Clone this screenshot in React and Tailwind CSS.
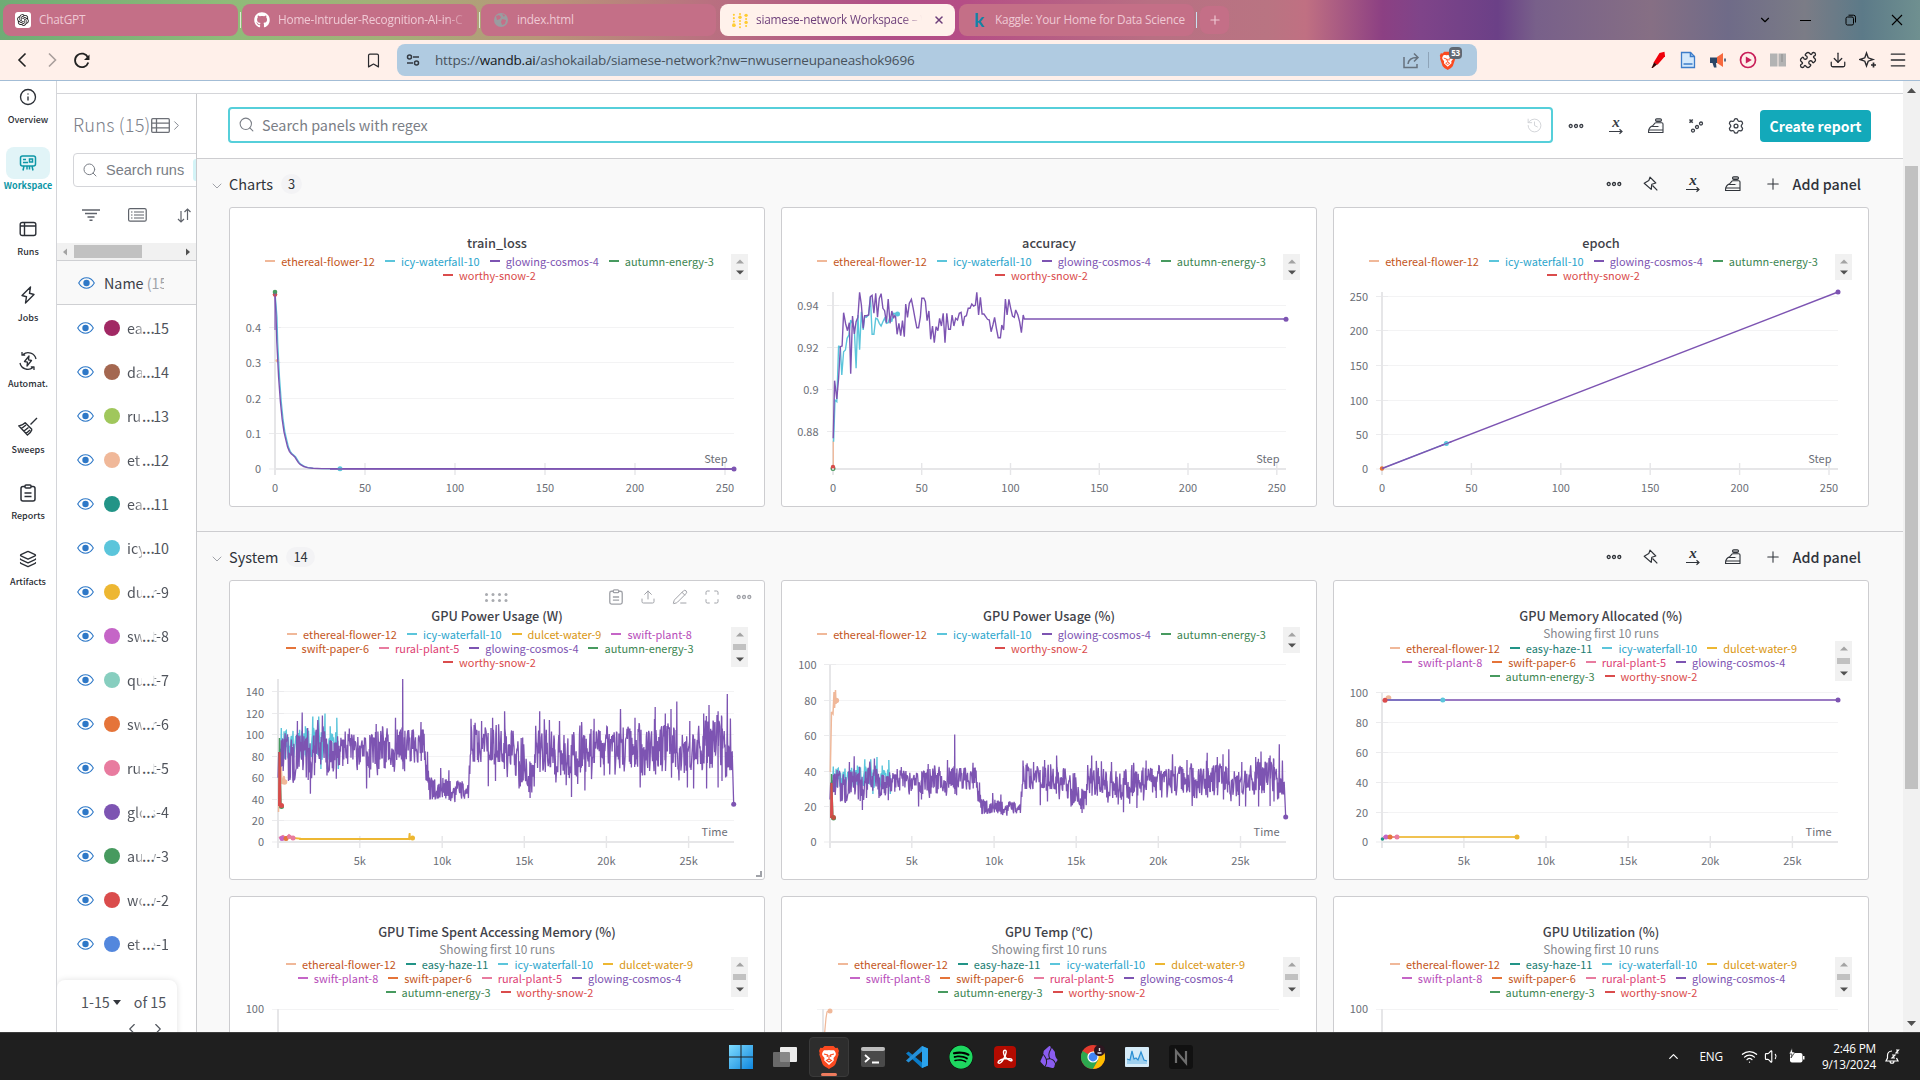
import React from "react";
import {
  Bookmark, Download, Menu, Puzzle, Search, Info, Zap, Layers, Plus,
  ChevronDown, ChevronLeft, ChevronRight, ChevronUp, History, X, Wifi, Volume1,
  Maximize, Upload, PencilLine,
} from "lucide-react";
import { FaGithub, FaSpotify } from "react-icons/fa";
import { RiOpenaiFill } from "react-icons/ri";
import { SiBrave, SiObsidian } from "react-icons/si";

const RUN = {
  e12: ["ethereal-flower-12", "#f0b899", "#c4561c"],
  h11: ["easy-haze-11", "#229487", "#1a7d72"],
  i10: ["icy-waterfall-10", "#5bc5db", "#2aa5cc"],
  d9: ["dulcet-water-9", "#edb732", "#d99611"],
  s8: ["swift-plant-8", "#c565c7", "#b64cb9"],
  p6: ["swift-paper-6", "#e57439", "#c4561c"],
  r5: ["rural-plant-5", "#e87b9f", "#dd3f74"],
  g4: ["glowing-cosmos-4", "#7d54b2", "#7d54b2"],
  a3: ["autumn-energy-3", "#479a5f", "#3c8551"],
  w2: ["worthy-snow-2", "#da4c4c", "#da4c4c"],
};

const FIVE = [["e12", "i10", "g4", "a3"], ["w2"]];
const NINE = [["e12", "i10", "d9", "s8"], ["p6", "r5", "g4", "a3"], ["w2"]];
const TEN = [["e12", "h11", "i10", "d9"], ["s8", "p6", "r5", "g4"], ["a3", "w2"]];

/* ---------- data ---------- */

function rng(seed) {
  let s = seed;
  return () => {
    s = (s * 1664525 + 1013904223) % 4294967296;
    return s / 4294967296;
  };
}

const ENVELOPE = [
  [4, 72, 96], [22, 66, 98], [40, 62, 92], [60, 72, 104], [80, 66, 98], [92, 60, 90], [105, 76, 104], [125, 74, 104], [140, 68, 94], [160, 74, 96],
  [200, 78, 100], [225, 72, 94], [255, 72, 98], [290, 74, 104], [310, 74, 98], [330, 78, 102], [370, 78, 102], [392, 80, 104],
  [398, 70, 92], [406, 60, 92], [408, 43, 59], [440, 43, 59], [470, 42, 55], [500, 44, 59], [515, 43, 57], [519, 70, 106], [530, 80, 108],
  [550, 78, 102], [575, 78, 108], [610, 78, 104], [640, 64, 98], [668, 62, 96], [672, 52, 78], [692, 50, 76], [696, 74, 106],
  [720, 70, 104], [745, 68, 98], [770, 62, 96], [795, 66, 98], [825, 70, 106], [835, 56, 88], [845, 72, 102],
  [890, 72, 100], [925, 70, 104], [965, 70, 104], [990, 68, 98], [1020, 72, 104], [1060, 72, 106], [1100, 68, 96], [1130, 74, 100],
  [1150, 74, 112], [1190, 74, 112], [1220, 74, 110], [1227, 72, 104],
];

const EXTREMES = [
  [51, 113], [64, 121], [86, 45], [119, 118], [156, 59], [192, 106], [238, 50], [246, 60], [264, 110], [281, 108], [316, 116], [336, 152], [341, 66],
  [385, 112], [439, 69], [461, 67], [521, 115], [549, 113], [567, 52], [579, 116], [587, 57], [611, 122], [650, 50], [680, 41], [706, 122],
  [732, 114], [746, 63], [759, 113], [778, 53], [792, 42], [809, 54], [820, 112], [829, 48], [853, 115], [880, 62], [925, 124], [964, 116], [978, 51],
  [1018, 126], [1019, 63], [1046, 120], [1061, 124], [1063, 60], [1077, 131], [1105, 51], [1112, 113], [1122, 50], [1149, 120], [1158, 50],
  [1164, 128], [1188, 51], [1189, 122], [1198, 118], [1199, 57], [1213, 138], [1218, 70],
];

function envelopeAt(u) {
  for (let i = 1; i < ENVELOPE.length; i++) {
    if (u <= ENVELOPE[i][0]) {
      const a = ENVELOPE[i - 1];
      const b = ENVELOPE[i];
      const t = (u - a[0]) / (b[0] - a[0]);
      return [a[1] + (b[1] - a[1]) * t, a[2] + (b[2] - a[2]) * t];
    }
  }
  return [80, 104];
}

/* x runs over 0..1232, y is in watts */
const POWER = (() => {
  const r = rng(77);
  const pts = [[0, 60], [2, 84]];
  let k = 0;
  for (let u = 5; u < 1227; u += 1.3) {
    const [lo, hi] = envelopeAt(u);
    const wide = r() < 0.12 ? 1.35 : 1;
    const side = r() < 0.5 ? -1 : 1;
    pts.push([u, (lo + hi) / 2 - 1 + side * Math.pow(r(), 0.85) * (hi - lo) * 0.68 * wide]);
    while (k < EXTREMES.length && EXTREMES[k][0] <= u) {
      pts.push([u + 0.6, EXTREMES[k][1]]);
      k++;
    }
  }
  pts.push([1228, 84], [1232, 35]);
  return pts;
})();

const ICY_POWER = (() => {
  const r = rng(9);
  const pts = [];
  for (let u = 6; u < 165; u += 1.5) {
    pts.push([u, 76 + r() * 31]);
  }
  [[74, 108], [94, 117], [110, 117], [127, 120], [141, 108], [159, 116], [116, 68], [133, 68], [163, 68]].forEach((p) => pts.push(p));
  return pts.sort((a, b) => a[0] - b[0]);
})();

const powerLine = (data, x0, y0, perWatt) =>
  data.map(([u, w]) => `${(x0 + u / 2.7034).toFixed(1)},${(y0 - w * perWatt).toFixed(1)}`).join(" ");

const ACC = "177,715 181,542 187,597 192,535 197,440 202,438 206,338 212,372 217,392 222,368 226,521 231,348 236,402 241,365 246,352 251,277 256,315 261,385 265,347 270,347 276,345 281,290 286,286 291,340 296,280 301,352 306,295 311,281 316,325 321,332 326,368 331,297 336,370 341,333 346,355 351,343 356,403 361,370 366,407 371,362 376,410 380,312 385,352 390,310 396,298 401,325 406,355 411,383 416,383 421,350 425,295 431,295 435,305 440,362 445,333 450,418 455,378 460,428 465,380 470,392 475,355 480,378 485,340 490,428 495,340 500,388 505,388 510,345 515,378 520,355 525,360 530,340 535,337 540,378 545,350 550,347 555,325 560,325 565,312 570,318 575,315 579,277 584,345 589,292 594,342 599,342 604,350 609,358 614,360 619,395 624,375 629,352 634,385 639,413 645,413 649,375 654,390 659,297 664,345 669,298 674,325 679,348 684,352 688,330 694,345 699,365 704,398 709,345 712,357 1445,357";
const ACC_ICY = "178,725 182,600 187,605 192,437 197,445 201,525 206,455 211,450 216,415 221,405 226,360 231,370 236,385 241,505 246,345 251,449 256,335 261,390 265,350 270,352 276,345 281,290 286,403 291,403 296,355 301,357 306,370 311,378 316,365 321,355 326,370 331,368 336,350 341,365 346,340 357,342";
const scaled = (s) =>
  s.split(" ").map((p) => {
    const [x, y] = p.split(",").map(Number);
    return `${(770 + x / 2.8).toFixed(1)},${(200 + y / 3).toFixed(1)}`;
  }).join(" ");

/* ---------- charts ---------- */

function Axes({ left, right, top, bottom, yTicks, xTicks, labelX, name }) {
  return (
    <g>
      {yTicks.map(([l, y]) => (
        <g key={l}>
          {y < bottom && <line x1={left - 6} x2={right} y1={y} y2={y} stroke="#f3f3f4" strokeWidth="1" />}
          <line x1={left - 6} x2={left + 6} y1={y} y2={y} stroke="#ebebed" strokeWidth="1" />
          <text x={labelX} y={y + 4} textAnchor="end" className="fill-[#6b6e76] text-[11px]">{l}</text>
        </g>
      ))}
      <line x1={left} x2={left} y1={top} y2={bottom + 6} stroke="#e6e6e8" strokeWidth="2" />
      <line x1={left} x2={right} y1={bottom} y2={bottom} stroke="#e6e6e8" strokeWidth="2" />
      {xTicks.map(([l, x]) => (
        <g key={l}>
          <line x1={x} x2={x} y1={bottom - 6} y2={bottom + 6} stroke="#e6e6e8" strokeWidth="1.4" />
          <text x={x} y={bottom + 23} textAnchor="middle" className="fill-[#6b6e76] text-[11px]">{l}</text>
        </g>
      ))}
      <text x={right - 6.5} y={bottom - 6} textAnchor="end" className="fill-[#6b6e76] text-[11px]">{name}</text>
    </g>
  );
}

const Dot = ({ x, y, c, r = 2.5 }) => <circle cx={x} cy={y} r={r} fill={c} />;
const Line = ({ p, c, w = 1.25, o = 1 }) => (
  <polyline points={p} fill="none" stroke={c} strokeWidth={w} strokeLinejoin="miter" strokeMiterlimit="3" opacity={o} />
);

const LOSS = [[0, 0.492], [0.6, 0.43], [1, 0.36], [2, 0.26], [3, 0.19], [4, 0.14], [5, 0.105], [6, 0.083], [7, 0.062], [8, 0.05], [9, 0.043], [10, 0.039], [11, 0.034], [12, 0.026], [13, 0.018], [14, 0.013], [16, 0.007], [18, 0.004], [21, 0.002], [26, 0.001], [255, 0]];
const lossLine = (d) => LOSS.map(([s, v]) => `${275 + s * 1.8 + d},${469 - v * 354}`).join(" ");

function LossChart() {
  return (
    <>
      <Axes left={275} right={734} top={292} bottom={469} labelX={261} name="Step"
        yTicks={[["0.4", 327.5], ["0.3", 362.5], ["0.2", 398.5], ["0.1", 433.5], ["0", 469]]}
        xTicks={[["0", 275], ["50", 365], ["100", 455], ["150", 545], ["200", 635], ["250", 725]]} />
      <Line p={`275,292 ${lossLine(0.9).split(" ").slice(1, -1).join(" ")} 340,468.8`} c="#5bc5db" />
      <Dot x={277} y={360.5} c="#f0b899" r={1.6} />
      <Line p={lossLine(0)} c="#7d54b2" w={1.4} />
      <Dot x={275} y={294.5} c="#da4c4c" r={2.3} />
      <Dot x={275} y={292} c="#479a5f" r={2.3} />
      <line x1="275" x2="275" y1="293" y2="330" stroke="#7d54b2" strokeWidth="1" />
      <Dot x={340} y={468.7} c="#5bc5db" />
      <line x1="330" x2="734" y1="469" y2="469" stroke="#7d54b2" strokeWidth="1.3" />
      <Dot x={734} y={469} c="#7d54b2" />
    </>
  );
}

function AccuracyChart() {
  return (
    <>
      <Axes left={833} right={1286} top={292} bottom={469} labelX={818.5} name="Step"
        yTicks={[["0.94", 305.5], ["0.92", 347.5], ["0.9", 389.5], ["0.88", 431.5]]}
        xTicks={[["0", 833], ["50", 921.7], ["100", 1010.5], ["150", 1099.3], ["200", 1188], ["250", 1276.8]]} />
      <line x1="833.3" x2="833.3" y1="441" y2="466" stroke="#f0b899" strokeWidth="1.3" />
      <Line p={scaled(ACC_ICY)} c="#5bc5db" w={1.4} />
      <Line p={scaled(ACC)} c="#7d54b2" w={1.4} />
      <Dot x={897.5} y={314} c="#5bc5db" />
      <Dot x={833} y={468.5} c="#479a5f" />
      <Dot x={833} y={467} c="#da4c4c" r={2.2} />
      <Dot x={833} y={469} c="#e6e6e8" r={1} />
      <Dot x={1286} y={319.3} c="#7d54b2" />
    </>
  );
}

function EpochChart() {
  return (
    <>
      <Axes left={1382} right={1838} top={292} bottom={469} labelX={1368} name="Step"
        yTicks={[["250", 296.5], ["200", 330.5], ["150", 365.5], ["100", 400.5], ["50", 434.5], ["0", 469]]}
        xTicks={[["0", 1382], ["50", 1471.4], ["100", 1560.8], ["150", 1650.2], ["200", 1739.6], ["250", 1829]]} />
      <Line p="1382,468.5 1446,443.5" c="#5bc5db" />
      <Dot x={1382} y={468.5} c="#e57439" r={2.2} />
      <Line p="1382,468.5 1838,292" c="#7d54b2" w={1.4} />
      <Dot x={1446.3} y={443.6} c="#5bc5db" />
      <Line p="1440,446 1452,441.4" c="#7d54b2" w={1.1} />
      <Dot x={1838} y={292} c="#7d54b2" />
    </>
  );
}

function PowerWattChart() {
  return (
    <>
      <Axes left={278} right={734} top={679} bottom={842} labelX={264} name="Time"
        yTicks={[["140", 691.5], ["120", 713.5], ["100", 734.5], ["80", 756.5], ["60", 777.5], ["40", 799.5], ["20", 820.5], ["0", 842]]}
        xTicks={[["5k", 359.8], ["10k", 442.2], ["15k", 524.3], ["20k", 606.4], ["25k", 688.6]]} />
      <Line p="278.5,812 280,768 281,760 282,784 284,776 285,782" c="#f0b899" w={1.5} />
      <Line p={powerLine(ICY_POWER, 278, 842, 1.0714)} c="#5bc5db" w={1.4} />
      <Line p={powerLine(POWER, 278, 842, 1.0714)} c="#7d54b2" w={1.3} />
      <Dot x={284.5} y={782} c="#f0b899" r={2.8} />
      <Line p="279,806 279.5,738 281,806" c="#479a5f" w={1.5} />
      <Dot x={281.5} y={806.5} c="#479a5f" />
      <Line p="279,806 279.5,752 280.5,806" c="#da4c4c" w={2} />
      <Dot x={281.5} y={805.5} c="#da4c4c" />
      <Line p="281,837 300,838.6 300,839 409,839 409.6,833 410,839 412.5,838" c="#edb732" w={1.8} />
      <Dot x={412.5} y={838} c="#edb732" />
      <Line p="279,838 283,836 286,838 289,835 293,838" c="#e87b9f" w={2} />
      <Dot x={282} y={838.5} c="#c565c7" />
      <Dot x={286} y={838.5} c="#e57439" />
      <Dot x={289} y={837} c="#e87b9f" r={2} />
      <Dot x={293} y={838} c="#e87b9f" />
      <Dot x={733.7} y={804.3} c="#7d54b2" />
    </>
  );
}

function PowerPercentChart() {
  return (
    <>
      <Axes left={830} right={1286} top={665} bottom={842} labelX={816.5} name="Time"
        yTicks={[["100", 664.5], ["80", 700.5], ["60", 735.5], ["40", 771.5], ["20", 806.5], ["0", 842]]}
        xTicks={[["5k", 911.8], ["10k", 994.1], ["15k", 1076.2], ["20k", 1158.3], ["25k", 1240.5]]} />
      <Line p="830.3,772 831.5,712 833,714 834,692 834.6,708 835.5,690 836,704" c="#f0b899" w={1.5} />
      <Dot x={836.3} y={700.5} c="#f0b899" r={2.8} />
      <Line p={powerLine(ICY_POWER, 830, 842, 0.708)} c="#5bc5db" w={1.4} />
      <Line p={powerLine(POWER, 830, 842, 0.708)} c="#7d54b2" w={1.3} />
      <Line p="831,818 831.5,774 833,820" c="#479a5f" w={1.4} />
      <Line p="831,818 831.5,783 832.5,818" c="#da4c4c" w={2} />
      <Dot x={833.5} y={818} c="#479a5f" />
      <Dot x={833.5} y={817.5} c="#c2503f" r={2.4} />
      <Dot x={1285.7} y={817} c="#7d54b2" />
    </>
  );
}

function MemoryChart() {
  return (
    <>
      <Axes left={1382} right={1838} top={693} bottom={842} labelX={1368} name="Time"
        yTicks={[["100", 692.5], ["80", 722.5], ["60", 752.5], ["40", 782.5], ["20", 812.5], ["0", 842]]}
        xTicks={[["5k", 1463.9], ["10k", 1546], ["15k", 1628.1], ["20k", 1710.3], ["25k", 1792.4]]} />
      <Dot x={1388.5} y={698} c="#f0b899" r={2.8} />
      <Line p="1383,700 1838,700" c="#7d54b2" w={2} o={0.78} />
      <Line p="1386,700 1442,700" c="#7470c0" w={1.6} />
      <Dot x={1385} y={700.3} c="#da4c4c" />
      <Dot x={1442.8} y={700} c="#5bc5db" />
      <Dot x={1838} y={700} c="#7d54b2" />
      <Line p="1384,837 1517,837" c="#edb732" w={1.8} o={0.85} />
      <Dot x={1382.5} y={839} c="#229487" r={1.8} />
      <Line p="1383,837 1397,837" c="#e87b9f" w={1.6} />
      <Dot x={1386} y={837} c="#c565c7" />
      <Dot x={1390} y={837} c="#e57439" />
      <Dot x={1397} y={837} c="#e87b9f" />
      <Dot x={1517} y={837} c="#edb732" />
    </>
  );
}

function TopOnly({ left, labelX, label = true, trace }) {
  return (
    <>
      <line x1={left - 6} x2={left + 456} y1="1009.5" y2="1009.5" stroke="#f3f3f4" />
      <line x1={left} x2={left} y1="1009" y2="1040" stroke="#e6e6e8" strokeWidth="2" />
      {label && <text x={labelX} y="1013" textAnchor="end" className="fill-[#6b6e76] text-[11px]">100</text>}
      {trace}
    </>
  );
}

/* ---------- cards ---------- */

function Legend({ rows }) {
  return (
    <div className="mr-4 ml-[18px] flex justify-between">
      <div className="flex flex-1 flex-col">
        {rows.map((row, i) => (
          <div key={i} className="flex h-[14px] items-center justify-center gap-[10px]">
            {row.map((k) => (
              <span key={k} className="flex items-center gap-[6px] whitespace-nowrap text-[10.950px] leading-[14px]" style={{ color: RUN[k][2] }}>
                <i className="block h-[2px] w-[10px]" style={{ background: RUN[k][1] }} />
                {RUN[k][0]}
              </span>
            ))}
          </div>
        ))}
      </div>
      <div className={(rows.length > 2 ? "h-[40px]" : "h-[26px]") + " flex w-[17px] flex-col items-center justify-between bg-[#f1f1f1] py-[5px]"}>
        <svg width="8" height="5"><path d="M0 4.5 4 0.5 8 4.5z" fill="#a3a3a3" /></svg>
        {rows.length > 2 && <i className="block h-[6px] w-[13px] bg-[#c1c1c1]" />}
        <svg width="8" height="5"><path d="M0 0.5 4 4.5 8 0.5z" fill="#505050" /></svg>
      </div>
    </div>
  );
}

function Card({ x, y, title, rows, sub, hovered, children }) {
  const head = 46 + (sub ? 14 : 0) + rows.length * 14;
  return (
    <div className="relative flex h-[300px] w-[536px] shrink-0 flex-col overflow-hidden rounded-[3px] border border-[#cdcdd0] bg-white">
      <div className="flex h-[25px] shrink-0 items-end justify-center">
        {hovered && (
          <>
            <svg width="24" height="10" className="mb-[3px]">
              {[1.5, 8, 14.5, 21].map((c) => [1.5, 7.5].map((r) => <circle key={c + "-" + r} cx={c} cy={r} r="1.5" fill="#a9abb0" />))}
            </svg>
            <div className="absolute top-[8px] right-[12px] flex items-center gap-4 text-[#a0a2a8]">
              <ClipboardLines size={16} />
              <Upload size={16} strokeWidth={1.5} />
              <PencilLine size={16} strokeWidth={1.5} />
              <Maximize size={16} strokeWidth={1.5} />
              <Dots />
            </div>
          </>
        )}
      </div>
      <div className="flex h-[20px] shrink-0 items-center justify-center text-[12.750px] font-medium text-[#3f4249]">{title}</div>
      {sub && <div className="flex h-[14px] shrink-0 items-center justify-center text-[11.900px] text-[#85878d]">Showing first 10 runs</div>}
      <div className="shrink-0 pt-px"><Legend rows={rows} /></div>
      <svg width="534" height={298 - head} viewBox={`${x + 1} ${y + 1 + head} 534 ${298 - head}`} className="shrink-0 overflow-visible">
        {children}
      </svg>
      {hovered && <i className="absolute right-[2px] bottom-[2px] h-[6px] w-[6px] border-r-2 border-b-2 border-[#a0a2a8]" />}
    </div>
  );
}

/* ---------- small icons ---------- */

const ClipboardLines = ({ size = 18 }) => (
  <svg width={size} height={size} viewBox="0 0 18 18" fill="none" stroke="currentColor" strokeWidth="1.500">
    <rect x="2" y="2.500" width="14" height="14.500" rx="2" /><rect x="6" y="1" width="6" height="3" rx="1" fill="#fff" /><path d="M5.500 9h7M5.500 12.500h7" />
  </svg>
);
const Dots = () => (
  <svg width="16" height="16" viewBox="0 0 16 16" fill="none" stroke="currentColor" strokeWidth="1.3">
    <circle cx="2.7" cy="8" r="1.5" /><circle cx="8" cy="8" r="1.5" /><circle cx="13.3" cy="8" r="1.5" />
  </svg>
);
const XAxis = () => (
  <svg width="16" height="16" viewBox="0 0 16 16" fill="none" stroke="currentColor" strokeWidth="1.2" className="overflow-visible">
    <text x="8" y="9" textAnchor="middle" fill="currentColor" stroke="none" className="font-['Liberation_Serif'] text-[15px] font-bold italic">x</text>
    <path d="M1 13.5h13M11.5 11.2l2.5 2.3-2.5 2.3" />
  </svg>
);
const Iron = () => (
  <svg width="18" height="18" viewBox="0 0 18 18" fill="none" stroke="currentColor" strokeWidth="1.1" strokeLinejoin="round">
    <path d="M8.2 5.8h6.600c.7 0 1.200.5 1.200 1.200v8.500H1.500c0-2.800 1.200-5.400 3.600-6.400" />
    <path d="M8.200 5.800 5 9.500h6.500M1.500 13h14.500M12 9.200h.1M14 9.200h.1" />
    <rect x="8.500" y="1.800" width="6" height="2.600" rx="1.300" fill="currentColor" fillOpacity=".4" />
  </svg>
);
const Outlier = () => (
  <svg width="16" height="18" viewBox="0 0 16 18" fill="none" stroke="currentColor" strokeWidth="1.3">
    <path d="M1.500 2.500l3.200 3.200M4.700 2.500 1.500 5.700" strokeWidth="1.600" />
    <circle cx="13" cy="6.500" r="1.500" /><circle cx="9" cy="10" r="1.500" /><circle cx="5" cy="13.600" r="1.500" />
  </svg>
);
const Gear = () => (
  <svg width="18" height="18" viewBox="0 0 24 24" fill="none" stroke="currentColor" strokeWidth="1.700">
    <path d="M12 2.200a2.600 2.600 0 0 1 2.500 2.200 2 2 0 0 0 2.600 1.400 2.600 2.600 0 0 1 3.200 1.100 2.600 2.600 0 0 1-.5 3.400 2.200 2.200 0 0 0 0 3.400 2.600 2.600 0 0 1 .5 3.400 2.600 2.600 0 0 1-3.200 1.100 2 2 0 0 0-2.600 1.400 2.600 2.600 0 0 1-5 0 2 2 0 0 0-2.600-1.400 2.600 2.600 0 0 1-3.200-1.100 2.600 2.600 0 0 1 .5-3.400 2.200 2.200 0 0 0 0-3.400 2.600 2.600 0 0 1-.5-3.400 2.600 2.600 0 0 1 3.200-1.100 2 2 0 0 0 2.600-1.400A2.600 2.600 0 0 1 12 2.200z" />
    <circle cx="12" cy="12" r="2.600" />
  </svg>
);
const PushPin = () => (
  <svg width="16" height="16" viewBox="0 0 16 16" fill="none" stroke="currentColor" strokeWidth="1.200" strokeLinejoin="round">
    <path d="M7 1.200 5.800 4.600 1.200 7.200l7 6.200.6-5.200 4-1.200z" /><path d="M9.500 9.500l4.800 4.800" />
  </svg>
);
const Eye = () => (
  <svg width="17" height="12" viewBox="0 0 17 12" className="shrink-0">
    <path d="M.7 6C2.800 2.400 5.400.8 8.500.8S14.200 2.400 16.300 6c-2.100 3.600-4.700 5.200-7.800 5.200S2.800 9.600.7 6z" fill="none" stroke="#2e78c7" strokeWidth="1.100" />
    <circle cx="8.500" cy="6" r="3.200" fill="#2e78c7" />
  </svg>
);

/* ---------- browser chrome ---------- */

function Tab({ icon, label, active, wide, fade }) {
  return (
    <div className={"mt-1 flex h-8 w-[235px] shrink-0 items-center rounded-lg pl-3 text-[11.800px] " + (active ? "bg-[#fff1eb] text-[#6d3f7a]" : "bg-[#c46f87] text-[#efc9d4]")}>
      <span className="flex w-[16px] shrink-0 justify-center">{icon}</span>
      <span className={"ml-2 overflow-hidden whitespace-nowrap tracking-[-0.200px] " + (fade ? "[mask-image:linear-gradient(to_right,#000_88%,transparent)] " : "") + (active ? "w-[166px]" : wide ? "" : "w-[191px]")}>{label}</span>
      {active && <X size={12} strokeWidth={3} className="ml-[11px]" />}
    </div>
  );
}

function WandbLogo() {
  return (
    <svg width="17" height="17" viewBox="0 0 17 17" fill="#ffcc33">
      <circle cx="2" cy="2.500" r="1.100" /><circle cx="2" cy="6" r="1.100" /><circle cx="2" cy="9.500" r="1.100" /><circle cx="2" cy="13.500" r="2" />
      <circle cx="8.500" cy="1.500" r="1.100" /><circle cx="8.500" cy="5" r="1.800" /><circle cx="8.500" cy="9" r="1.100" /><circle cx="8.500" cy="12.300" r="1.100" /><circle cx="8.500" cy="15.600" r="1.100" />
      <circle cx="15" cy="3" r="1.800" /><circle cx="15" cy="7" r="1.100" /><circle cx="15" cy="10.500" r="1.800" /><circle cx="15" cy="14.300" r="1.100" />
    </svg>
  );
}

function TabStrip() {
  return (
    <div className="flex h-10 shrink-0 bg-[linear-gradient(90deg,#6fac75_0,#8fbb79_12%,#a3b078_20%,#b89679_28%,#b97080_37%,#b04f88_46%,#b54d86_50%,#b87083_60%,#b97482_66%,#c07082_68%,#8c4083_72%,#7f4489_74%,#6b4087_78%,#78608a_80%,#866f84_86%,#6f6b88_90%,#7b7c86_94%,#5c7a88_97%,#6f9090_100%)] pl-[3px] font-['Open_Sans',sans-serif]">
      <Tab icon={<span className="flex h-4 w-4 items-center justify-center rounded-[3px] bg-white"><RiOpenaiFill size={14} color="#111" /></span>} label="ChatGPT" />
      <i className="mx-[1.500px] mt-3 h-4 w-px bg-[#dfe9d4]" />
      <Tab icon={<FaGithub size={16} color="#fff" />} label="Home-Intruder-Recognition-AI-in-C" fade />
      <i className="mx-[1.500px] mt-3 h-4 w-px bg-[#dfe9d4]" />
      <Tab icon={<svg width="14" height="14" viewBox="0 0 14 14"><circle cx="7" cy="7" r="7" fill="#9a9ca0" /><path d="M2 3l3-1 2 2-1 2-3 1zM8 6l4 1-1 4-3 1-1-3zM8 1l3 1-1 2z" fill="#c46f87" /></svg>} label="index.html" />
      <span className="w-[4px]" />
      <Tab active fade icon={<WandbLogo />} label="siamese-network Workspace – W" />
      <span className="w-[4px]" />
      <Tab wide icon={<span className="font-['Lato'] text-[19px] leading-4 font-bold text-[#1183a8]">k</span>} label="Kaggle: Your Home for Data Science" />
      <i className="mx-[1.500px] mt-3 h-4 w-px bg-[#c9e2f2]" />
      <span className="mt-[6px] ml-[2px] flex h-7 w-[29px] items-center justify-center rounded-lg bg-[#c46f87]"><Plus size={14} color="#efc9d4" /></span>
      <div className="mr-[17px] ml-auto flex items-center text-black">
        <ChevronDown size={14} strokeWidth={2} className="mr-[28px]" />
        <svg width="11" height="11" className="mr-[34px]"><path d="M0 5.500h11" stroke="#000" /></svg>
        <svg width="12" height="12" viewBox="0 0 12 12" fill="none" stroke="#000" className="mr-[34px]"><rect x="1" y="3" width="7.500" height="8" rx="1.500" /><path d="M3.500 1.200h5a2 2 0 0 1 2 2v5.300" /></svg>
        <svg width="12" height="12" stroke="#000" strokeWidth="1.100"><path d="M1 1l10 10M11 1 1 11" /></svg>
      </div>
    </div>
  );
}

function Toolbar() {
  return (
    <div className="flex h-[41px] shrink-0 items-center border-b border-[#a3bdd6] bg-[#fff0ea] font-['Open_Sans',sans-serif] text-[#2a2a2e]">
      <svg width="96" height="20" viewBox="0 0 96 20" fill="none" strokeWidth="1.600">
        <path d="M25.500 3.500 19 10l6.500 6.500" stroke="#222" /><path d="M49 3.500 55.500 10 49 16.500" stroke="#a99f9c" />
        <path d="M88 7.500A6.800 6.800 0 1 0 88.300 12.500" stroke="#222" strokeWidth="1.800" /><path d="M89.500 4.500v5.500H84z" fill="#222" />
      </svg>
      <Bookmark size={17} strokeWidth={1.700} className="ml-[269px]" />
      <div className="ml-[15px] flex h-8 w-[1080px] items-center rounded-lg bg-[#b0cbe1] pl-[9px]">
        <svg width="14" height="14" viewBox="0 0 14 14" fill="none" stroke="#333a42" strokeWidth="1.500"><circle cx="3.500" cy="4" r="2" /><path d="M7 4h6M1 10h6" /><circle cx="10.500" cy="10" r="2" /></svg>
        <span className="ml-[15px] text-[13.500px] tracking-[-0.170px] text-[#48525c]">https://<span className="text-[#16181b]">wandb.ai</span>/ashokailab/siamese-network?nw=nwuserneupaneashok9696</span>
        <div className="mr-[14px] ml-auto flex items-center">
          <svg width="17" height="17" viewBox="0 0 17 17" fill="none" stroke="#66727e" strokeWidth="1.500"><path d="M1 5v10.500h13V12M5 12c.5-4 3-6.500 9-6.500M11 1.500l4 4-4 4" /></svg>
          <i className="mx-[8px] h-4 w-px bg-[#8ea4b8]" />
          <span className="relative ml-[2px] block w-[24px]">
            <Lion size={19} />
            <span className="absolute -top-[4px] left-[10px] flex h-[12px] w-[13px] items-center justify-center rounded-[4px] bg-[#5f6872] text-[8px] leading-none font-bold tracking-tighter text-white">53</span>
          </span>
        </div>
      </div>
      <div className="mr-[12px] ml-auto flex items-center gap-[12px]">
        <svg width="18" height="18" viewBox="0 0 18 18"><path d="M10.500 2l5-1.200.5 4.500-7.500 8.500-4-2z" fill="#f0000a" /><path d="M5 11.500 2.500 17h1.200L8 13.500z" fill="#300" /></svg>
        <svg width="18" height="18" viewBox="0 0 18 18"><path d="M2.500 1.500h9l4 4v11h-13z" fill="#d4e8fb" stroke="#3d7cc9" strokeWidth="1.300" /><path d="M11.500 1.500v4h4M4.500 13h9" fill="none" stroke="#3d7cc9" strokeWidth="1.600" /></svg>
        <svg width="18" height="18" viewBox="0 0 18 18"><path d="M1 6.500h7v5.500H7l.5 4.500H5L3.500 12H1z" fill="#2a4666" /><path d="M8 6l6-4v14l-6-4z" fill="#f7693f" /><path d="M16 7.500v3" stroke="#2a4666" strokeWidth="1.500" /></svg>
        <svg width="18" height="18" viewBox="0 0 18 18"><circle cx="9" cy="9" r="7.500" fill="none" stroke="#c9205a" strokeWidth="1.700" /><path d="M6.800 5.500l6 3.500-6 3.500z" fill="#c9205a" /></svg>
        <svg width="18" height="18" viewBox="0 0 18 18"><path d="M1 2.500h7.500v13H1zM9.500 2.500H17v13H9.500z" fill="#b3b3b3" /><path d="M13 3v8" stroke="#8d8d8d" /></svg>
        <Puzzle size={18} strokeWidth={1.700} />
        <Download size={18} strokeWidth={1.700} />
        <svg width="18" height="18" viewBox="0 0 18 18" fill="none" stroke="#2a2a2e" strokeWidth="1.400"><path d="M7.500 2 9.200 6.800 14 8.500l-4.800 1.700L7.500 15l-1.700-4.800L1 8.500l4.800-1.700z" /><path d="M14.500 11.500v5M12 14h5" strokeWidth="1.700" /></svg>
        <Menu size={20} strokeWidth={1.600} className="-ml-[1px]" />
      </div>
    </div>
  );
}

/* ---------- left navigation ---------- */

const NAV = [
  ["Overview", <Info size={18} strokeWidth={1.8} />],
  ["Workspace", <svg width="18" height="18" viewBox="0 0 18 18" fill="none" stroke="currentColor" strokeWidth="1.500"><rect x="1.500" y="2" width="15" height="10" rx="2" /><path d="M4 5.500h3M4 8.500h5M5 12l-1 4.500M13 12l1 4.500M8 12v3.500M10.500 12v3.500" /><rect x="10.500" y="5" width="3" height="3" /></svg>],
  ["Runs", <svg width="18" height="16" viewBox="0 0 18 16" fill="none" stroke="currentColor" strokeWidth="1.400"><rect x="1.200" y="1.500" width="15.600" height="13" rx="2" /><path d="M1 5h16M5.500 1.500v13" /></svg>],
  ["Jobs", <svg width="16" height="18" viewBox="0 0 16 18" fill="none" stroke="currentColor" strokeWidth="1.400" strokeLinejoin="round"><path d="M10.500 1 2 9.500l4.500 1.200L5.500 17 14 8.500 9.500 7.300z" /></svg>],
  ["Automat.", <svg width="20" height="20" viewBox="0 0 20 20" fill="none" stroke="currentColor" strokeWidth="1.300" strokeLinejoin="round"><path d="M11 5 6.500 10.500l3 .7L9 15l4.500-5.500-3-.7zM2 12a8 8 0 0 0 13 4.500M18 8A8 8 0 0 0 5 3.500M16 19v-3.200h-3.200M4 1v3.200h3.200" /></svg>],
  ["Sweeps", <svg width="20" height="20" viewBox="0 0 20 20" fill="none" stroke="currentColor" strokeWidth="1.400"><path d="M19 1l-6.500 6.500M7 5.500l7 7M7.500 5.500C5 8 3 8.500 1 9l8.500 9c1.500-1 3.500-2.500 4.500-5.500M3.500 11.500 8 8M6 14l4.500-3.500M8 16.500l4-3.500" /></svg>],
  ["Reports", <ClipboardLines size={18} />],
  ["Artifacts", <Layers size={18} strokeWidth={1.700} />],
];

function SideNav() {
  return (
    <nav className="flex w-[57px] shrink-0 flex-col items-center border-r border-[#d4d5d9] text-[#2b2f36]">
      {NAV.map(([label, icon], i) => (
        <div key={label} className={(i === 1 ? "text-[#0e97a7] font-bold" : "font-medium") + " flex h-[66px] shrink-0 flex-col items-center"}>
          <span className={(i === 1 ? "bg-[#e1f4f7]" : "") + " flex h-8 w-[44px] items-center justify-center rounded-lg"}>{icon}</span>
          <span className="flex h-[14px] items-center text-[9px]">{label}</span>
        </div>
      ))}
    </nav>
  );
}

/* ---------- runs list ---------- */

const RUNS = [
  ["#a12864", "ea", "15"], ["#a46750", "da", "14"], ["#a0c75c", "ru", "13"], ["#f0b899", "et", "12"], ["#229487", "ea", "11"],
  ["#5bc5db", "icy", "10"], ["#edb732", "du", "r-9"], ["#c565c7", "sw", "t-8"], ["#87cebf", "qu", "t-7"], ["#e57439", "sw", "r-6"],
  ["#e87b9f", "ru", "t-5"], ["#7d54b2", "glo", "s-4"], ["#479a5f", "au", "y-3"], ["#da4c4c", "wo", "w-2"], ["#5387dd", "et", "e-1"],
];

function RunsPanel() {
  return (
    <aside className="flex w-[140px] shrink-0 flex-col overflow-hidden border-r border-[#c9cacd]">
      <div className="mt-[17px] flex h-[28px] shrink-0 items-center pl-4 text-[#7d818a]">
        <span className="-mt-[2px] text-[18.200px] leading-[28px] font-light tracking-[0.200px] whitespace-nowrap">Runs (15)</span>
        <svg width="19" height="15" viewBox="0 0 19 15" fill="none" stroke="#6d7077" strokeWidth="1.300" className="shrink-0"><rect x=".7" y=".7" width="17.600" height="13.600" rx="1" /><path d="M1 5.200h17M1 9.800h17M5.500 1v13" /></svg>
        <ChevronRight size={15} strokeWidth={1.500} className="-ml-px shrink-0" />
      </div>
      <div className="mt-[14px] ml-4 flex h-[34px] w-[150px] shrink-0 items-center rounded-l-[4px] border border-[#d4d5d9] pl-[8px] font-['Liberation_Sans',sans-serif] text-[14.500px] text-[#7a7e86]">
        <Search size={16} strokeWidth={1.500} className="shrink-0" />
        <span className="mt-px ml-[8px] w-[87px] shrink-0 whitespace-nowrap">Search runs</span>
        <i className="h-[22px] w-[12px] shrink-0 rounded-[3px] bg-[#d3f4f7]" />
      </div>
      <div className="mt-[18px] flex h-[20px] shrink-0 items-center pl-[25px] text-[#5f636b]">
        <svg width="18" height="12" stroke="currentColor" strokeWidth="1.400" className="shrink-0"><path d="M0 1h18M3 4.500h12M5.500 8h7M7.500 11.300h3" /></svg>
        <svg width="19" height="14" fill="none" stroke="currentColor" strokeWidth="1.200" className="ml-[28px] shrink-0"><rect x=".6" y=".6" width="17.600" height="12.600" rx="1.500" /><path d="M3 4h1.500M6 4h10M3 7h1.500M6 7h10M3 10h1.500M6 10h10" /></svg>
        <svg width="14" height="15" fill="none" stroke="currentColor" strokeWidth="1.200" className="ml-[30px] shrink-0"><path d="M4 3v11M1 11l3 3 3-3M10.500 12V1M7.500 4l3-3 3 3" /></svg>
      </div>
      <div className="mt-[18px] flex h-[17px] shrink-0 items-center bg-[#f1f1f1]">
        <svg width="17" height="8"><path d="M10 0.500v7L6 4z" fill="#a3a3a3" /></svg>
        <i className="h-[13px] w-[68px] bg-[#c1c1c1]" />
        <svg width="17" height="8" className="ml-auto"><path d="M7 0.500v7L11 4z" fill="#505050" /></svg>
      </div>
      <div className="flex h-[45px] shrink-0 items-center border-y border-[#cfd0d3] bg-[#f9f9f9] pl-[21px] text-[14.300px] text-[#3c4048]">
        <Eye />
        <span className="ml-[9px] w-[60px] overflow-hidden whitespace-nowrap">Name <span className="text-[#a0a3a9]">(15</span></span>
      </div>
      <div className="flex h-[675px] shrink-0 flex-col pt-px">
        {RUNS.map(([c, a, b]) => (
          <div key={c} className="flex h-[44px] shrink-0 items-center pl-[20px] text-[14.300px] text-[#50545c]">
            <Eye />
            <i className="ml-[10px] block h-4 w-4 shrink-0 rounded-full" style={{ background: c }} />
            <span className="ml-[7px] w-[15px] shrink-0 overflow-hidden whitespace-nowrap [mask-image:linear-gradient(to_right,#000_55%,rgba(0,0,0,0.4))]">{a}</span>
            <span className="w-[11px] shrink-0 font-medium">...</span>
            <span className={"flex w-[16px] shrink-0 justify-end whitespace-nowrap " + (b.length > 2 ? "overflow-hidden [mask-image:linear-gradient(to_left,#000_75%,transparent)]" : "")}>{b}</span>
          </div>
        ))}
      </div>
      <div className="flex h-[60px] w-[120px] shrink-0 flex-col rounded-t-lg text-[14.300px] text-[#50545c] shadow-[0_0_6px_rgba(0,0,0,0.12)]">
        <div className="flex h-[44px] shrink-0 items-center pl-6">
          1-15
          <svg width="8" height="5" className="ml-[3px]"><path d="M0 0h8L4 5z" fill="#33363d" /></svg>
          <span className="ml-[13px]">of 15</span>
        </div>
        <div className="-mt-[4px] flex pl-[66px]">
          <ChevronLeft size={18} strokeWidth={1.500} /><ChevronRight size={18} strokeWidth={1.500} className="ml-[8px]" />
        </div>
      </div>
    </aside>
  );
}

/* ---------- workspace ---------- */

function SectionHead({ name, count }) {
  return (
    <div className="flex h-[48px] shrink-0 items-center pt-[2px] pr-[42px] pl-[12px] text-[#2f3339]">
      <ChevronDown size={16} strokeWidth={1.400} color="#9a9ca2" className="mt-1" />
      <span className="ml-1 text-[14.500px]">{name}</span>
      <span className="ml-[8px] flex h-5 items-center rounded-full bg-[#f3f3f5] px-[7px] text-[12.900px]">{count}</span>
      <div className="ml-auto flex items-center">
        <Dots /><span className="w-[21px]" /><PushPin /><span className="w-[26px]" /><XAxis /><span className="w-[23px]" /><Iron />
        <Plus size={18} strokeWidth={1.400} className="ml-[22px]" />
        <span className="ml-[11px] text-[14.300px] font-medium">Add panel</span>
      </div>
    </div>
  );
}

function Workspace() {
  return (
    <main className="flex min-w-0 flex-1 flex-col overflow-hidden bg-[#f9f9f9]">
      <div className="flex h-[65px] shrink-0 items-center border-b border-[#cdcdd0] bg-white pl-[31px] text-[#3a3e46]">
        <div className="-mt-[2px] flex h-[36px] w-[1325px] shrink-0 items-center rounded-[4px] border-2 border-[#56cfda] pr-[8px] pl-[8px] text-[14.400px] text-[#7a7e86]">
          <Search size={17} strokeWidth={1.500} className="-mt-[2px]" />
          <span className="ml-[7px]">Search panels with regex</span>
          <History size={17} strokeWidth={1.300} color="#cfd1d6" className="ml-auto" />
        </div>
        <div className="ml-[15px] flex items-center">
          <Dots /><span className="w-6" /><XAxis /><span className="w-[23px]" /><Iron /><span className="w-[23px]" /><Outlier /><span className="w-[23px]" /><Gear />
        </div>
        <span className="ml-[15px] flex h-8 w-[111px] items-center justify-center rounded-[4px] bg-[#13a9ba] text-[14px] font-bold whitespace-nowrap text-white">Create report</span>
      </div>
      <SectionHead name="Charts" count="3" />
      <div className="flex shrink-0 gap-4 pb-[24px] pl-8">
        <Card x={229} y={207} title="train_loss" rows={FIVE}><LossChart /></Card>
        <Card x={781} y={207} title="accuracy" rows={FIVE}><AccuracyChart /></Card>
        <Card x={1333} y={207} title="epoch" rows={FIVE}><EpochChart /></Card>
      </div>
      <div className="shrink-0 border-t border-[#cdcdd0]">
        <SectionHead name="System" count="14" />
      </div>
      <div className="flex shrink-0 gap-4 pb-4 pl-8">
        <Card x={229} y={580} title="GPU Power Usage (W)" rows={NINE} hovered><PowerWattChart /></Card>
        <Card x={781} y={580} title="GPU Power Usage (%)" rows={FIVE}><PowerPercentChart /></Card>
        <Card x={1333} y={580} title="GPU Memory Allocated (%)" rows={TEN} sub><MemoryChart /></Card>
      </div>
      <div className="flex shrink-0 gap-4 pl-8">
        <Card x={229} y={896} title="GPU Time Spent Accessing Memory (%)" rows={TEN} sub><TopOnly left={278} labelX={264} /></Card>
        <Card x={781} y={896} title="GPU Temp (℃)" rows={TEN} sub>
          <TopOnly left={823} label={false} trace={<><Line p="824,1040 826,1018 827,1012 829,1011" c="#f0b899" /><Dot x={830} y={1011} c="#f0b899" /></>} />
        </Card>
        <Card x={1333} y={896} title="GPU Utilization (%)" rows={TEN} sub><TopOnly left={1382} labelX={1368} /></Card>
      </div>
    </main>
  );
}

/* ---------- taskbar ---------- */

function TaskIcon({ children, active }) {
  return (
    <span className={"relative flex h-10 w-10 items-center justify-center rounded " + (active ? "border border-[#3a3a3a] bg-[#2d2d2d]" : "")}>
      {children}
      {active && <i className="absolute bottom-0 h-[3px] w-4 rounded-full bg-[#ee7b5d]" />}
    </span>
  );
}

function Lion({ size = 24 }) {
  return (
    <svg width={(size * 22) / 24} height={size} viewBox="0 0 22 24">
      <path d="M6.500 1h9l2 2 2.200-.3L21 6l-.7 2 .4 1.500-3.200 9.500c-1 2-4 3.500-6.500 5-2.500-1.500-5.500-3-6.500-5L1.300 9.500 1.700 8 1 6l1.300-3.300L4.500 3z" fill="#fb4a20" />
      <path d="M11 5c2 .8 4-.3 5.300.5 1.200 1.500 2.200 3.500 1.200 5L15.500 13l.3 2.500L11 20l-4.800-4.500.3-2.500-2-2.500c-1-1.500 0-3.500 1.200-5C7 4.700 9 5.800 11 5z" fill="#fff" />
      <path d="M6 9l3.500 1-.3 2M16 9l-3.500 1 .3 2M11 10v4M8.500 15.500 11 14l2.500 1.500L11 17z" stroke="#fb4a20" strokeWidth="1.100" fill="none" />
    </svg>
  );
}

function Taskbar() {
  return (
    <div className="flex h-12 shrink-0 items-center border-t border-[#3c3c3c] bg-[#1f1f1f] font-['Open_Sans',sans-serif] text-white">
      <div className="ml-[721px] flex gap-1">
        <TaskIcon><svg width="24" height="24"><defs><linearGradient id="win" x2="1" y2="1"><stop stopColor="#7fdcff" /><stop offset="1" stopColor="#0f86dd" /></linearGradient></defs><path d="M0 0h11.500v11.500H0zM12.500 0H24v11.500H12.500zM0 12.500h11.500V24H0zM12.500 12.500H24V24H12.500z" fill="url(#win)" /></svg></TaskIcon>
        <TaskIcon><svg width="24" height="24"><rect x="7" y="2" width="17" height="15" rx="1" fill="#ececec" /><rect x="0" y="7" width="17" height="15" rx="1" fill="#777" fillOpacity=".85" /></svg></TaskIcon>
        <TaskIcon active><Lion /></TaskIcon>
        <TaskIcon><svg width="24" height="20"><rect width="24" height="20" rx="2" fill="#4a4a4a" /><rect width="24" height="4" rx="2" fill="#bdbdbd" /><path d="M4 8l4 3.500L4 15M11 15.500h7" stroke="#fff" strokeWidth="1.800" fill="none" /></svg></TaskIcon>
        <TaskIcon><svg width="24" height="24" viewBox="0 0 24 24"><path d="M17 1l6 2.500v17L17 23 1 8.500 3.500 6.500 17 17.500z" fill="#0a7cc8" /><path d="M17 1 1 15.500l2.500 2L17 6.500z" fill="#2590d8" /><path d="M17 1l6 2.500v17L17 23z" fill="#2ba4ee" /></svg></TaskIcon>
        <TaskIcon><span className="rounded-full bg-black"><FaSpotify size={24} color="#1ed760" /></span></TaskIcon>
        <TaskIcon><svg width="22" height="22" viewBox="0 0 22 22"><rect width="22" height="22" rx="4" fill="#b30b00" /><path d="M4 16.500c0-2 5-4 9-4 3 0 5 .5 5 1.700 0 2.500-8.500-2.500-8.500-8 0-2.700 3-2.700 2.700 0-.4 4-4.500 11-6.700 11-.8 0-1.500 0-1.500-.7z" fill="none" stroke="#fff" strokeWidth="1.400" /></svg></TaskIcon>
        <TaskIcon><SiObsidian size={22} color="#8a5cf0" /></TaskIcon>
        <TaskIcon>
          <svg width="24" height="24" viewBox="0 0 24 24"><circle cx="12" cy="12" r="12" fill="#e33b2e" /><path d="M1.600 6A12 12 0 0 0 12 24l5.200-9L12 12z" fill="#2da94f" /><path d="M12 24A12 12 0 0 0 22.400 6H12l5.200 9z" fill="#fdbd00" /><circle cx="12" cy="12" r="5.600" fill="#fff" /><circle cx="12" cy="12" r="4.400" fill="#4285f4" /><circle cx="18.500" cy="5.500" r="5.500" fill="#2d1620" /><path d="M18.500 3v3M16.500 8h4" stroke="#ddd" strokeWidth="1.400" /></svg>
        </TaskIcon>
        <TaskIcon><svg width="24" height="20"><rect width="24" height="20" rx="1" fill="#d6ecf9" /><path d="M2 17V12l3 1 2-9 2 8 2-1 2 2 3-8 3 8 3 1v3z" fill="#9fd0ef" /><path d="M2 12l3 1 2-9 2 8 2-1 2 2 3-8 3 8 3 1" fill="none" stroke="#2a8fd4" strokeWidth="1.200" /></svg></TaskIcon>
        <TaskIcon><svg width="24" height="24"><rect width="24" height="24" rx="3" fill="#111" /><path d="M7 18V6l10 12V6" stroke="#6d6d6d" strokeWidth="2.200" fill="none" /></svg></TaskIcon>
      </div>
      <div className="mr-[20px] ml-auto flex items-center text-[11.800px]">
        <ChevronUp size={15} className="mr-[19px]" />
        <span className="mr-[18px] tracking-[-0.200px]">ENG</span>
        <Wifi size={17} strokeWidth={1.800} className="mr-[6px]" />
        <Volume1 size={17} strokeWidth={1.600} className="mr-[7px]" />
        <svg width="17" height="17" viewBox="0 0 17 17" className="mr-[17px]"><rect x="2" y="5" width="12.500" height="9.500" rx="2" fill="#fff" /><rect x="15" y="8" width="1.500" height="3.500" fill="#fff" /><path d="M4 0 1 6h3l-1 4 4-6H4.500z" fill="#fff" stroke="#1f1f1f" strokeWidth=".7" /></svg>
        <div className="-mt-[2px] text-right leading-4 tracking-[-0.200px]">
          <div>2:46 PM</div>
          <div>9/13/2024</div>
        </div>
        <svg width="16" height="16" viewBox="0 0 16 16" fill="none" stroke="#fff" strokeWidth="1.200" className="ml-[8px]"><path d="M8 2C5 2 3.500 4 3.500 6.500V9L2 12h12l-1.500-3M6 12c0 3 4 3 4 0M8 6h3l-3 3h3M12 1h2.500L12 4h2.500" /></svg>
      </div>
    </div>
  );
}

export default function App() {
  return (
    <div className="flex h-[1080px] w-[1920px] flex-col overflow-hidden bg-white font-['Noto_Sans_CJK_SC',sans-serif]">
      <TabStrip />
      <Toolbar />
      <div className="flex h-[951px] shrink-0 overflow-hidden">
        <SideNav />
        <div className="flex min-w-0 flex-1 flex-col pt-[12px]">
          <div className="flex min-h-0 flex-1 border-t border-[#d4d5d9]">
            <RunsPanel />
            <Workspace />
          </div>
        </div>
        <div className="flex w-[17px] shrink-0 flex-col items-center bg-[#f1f1f1]">
          <svg width="9" height="5" className="mt-[7px]"><path d="M0 5 4.500 0 9 5z" fill="#505050" /></svg>
          <i className="mt-[73px] h-[623px] w-[13px] bg-[#c1c1c1]" />
          <svg width="9" height="5" className="mt-auto mb-[6px]"><path d="M0 0h9L4.500 5z" fill="#505050" /></svg>
        </div>
      </div>
      <Taskbar />
    </div>
  );
}
